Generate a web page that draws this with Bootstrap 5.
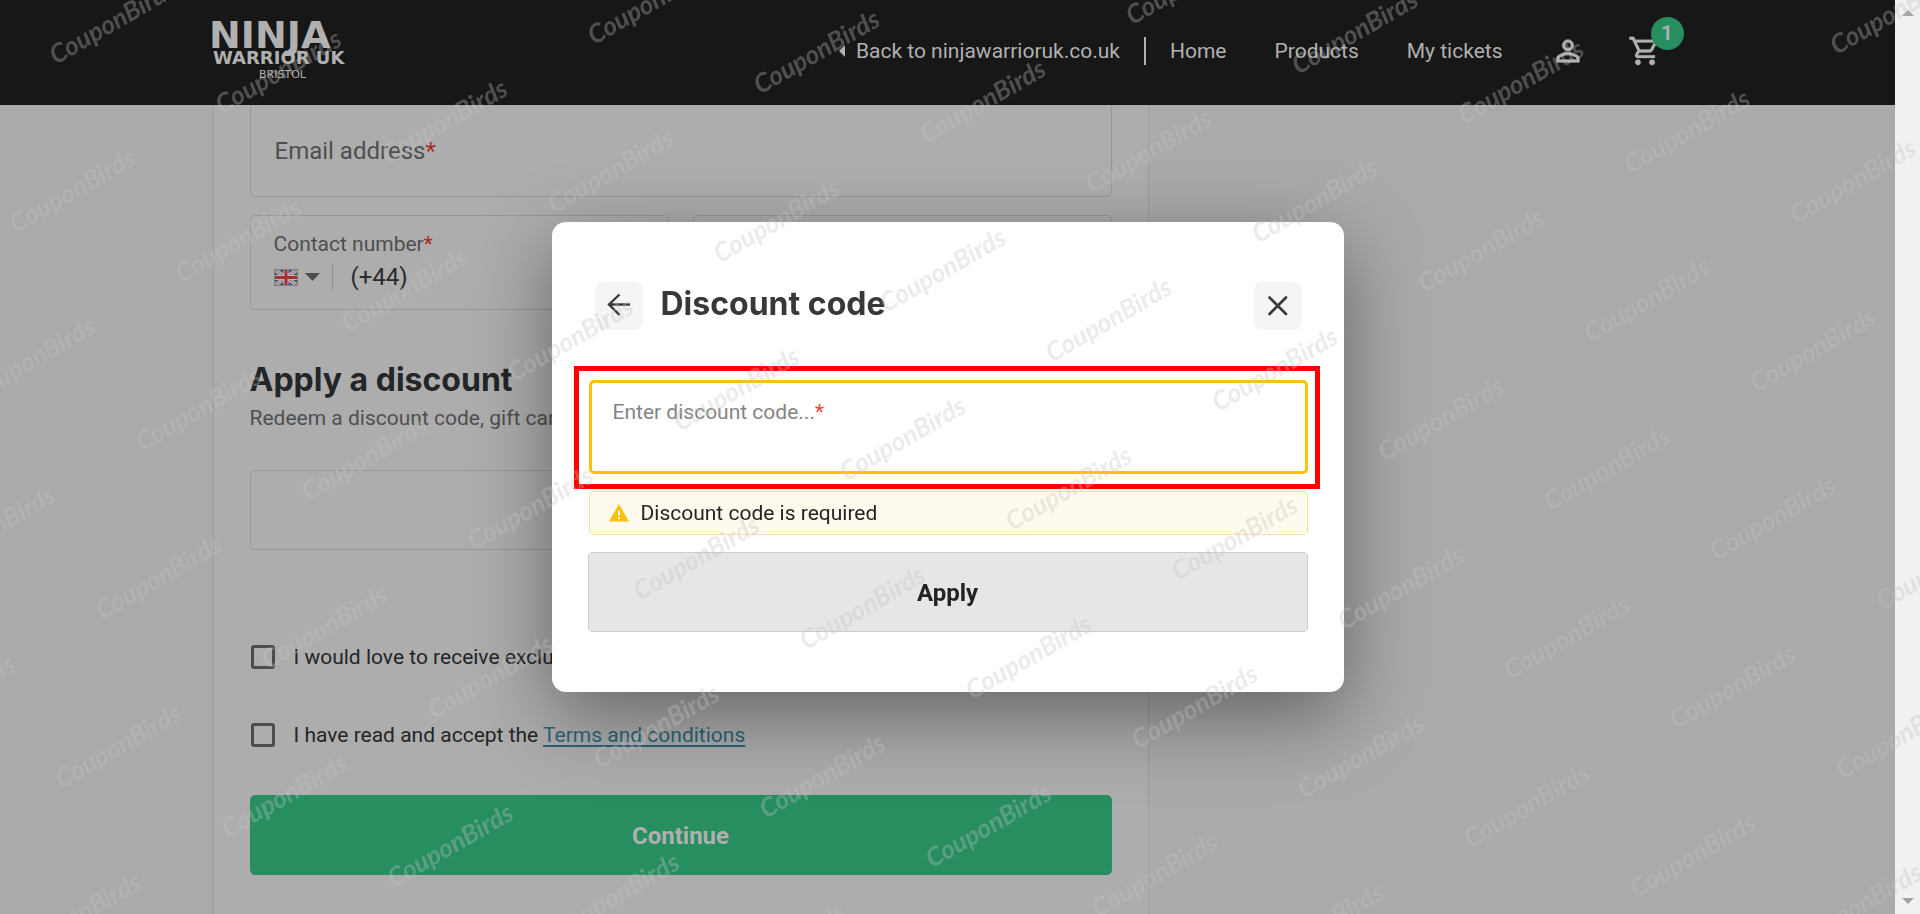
<!DOCTYPE html>
<html lang="en">
<head>
<meta charset="utf-8">
<meta name="viewport" content="width=device-width, initial-scale=1">
<title>Checkout - Ninja Warrior UK Bristol</title>
<link href="https://cdn.jsdelivr.net/npm/bootstrap@5.3.0/dist/css/bootstrap.min.css" rel="stylesheet">
<style>
  body { font-family: Roboto, "Liberation Sans", sans-serif; font-size: 21px; line-height: 32px; color: #232527; background: #aaaaaa; height: 100vh; overflow: hidden; }
  .page-side { padding-right: 25px; }
  .page-wrap { max-width: 1470px; }

  /* header */
  .site-header { background: #171717; height: 105px; }
  .site-header a { color: #b0b0b0; text-decoration: none; }
  .header-row { height: 102px; }
  .main-links { gap: 48px; }
  .back-link { gap: 11px; padding-right: 24px; border-right: 2px solid #b0b0b0; line-height: 28px; margin-right: -24px; }
  .brand-mark text { font-family: "DejaVu Sans", sans-serif; fill: #b0b0b0; }
  .cart-link { margin-right: 21px; margin-left: -5px; }
  .cart-count { top: -17px; left: 23px; width: 33px; height: 33px; line-height: 33px; font-size: 20px; background: #278e5f; }

  /* checkout card */
  .checkout { max-width: 936px; background: #adadad; border: 1px solid #9d9d9d; border-width: 0 1px; padding: 102px 36px 40px; min-height: 100vh; }
  .field-box { position: relative; border: 1px solid #989898; border-radius: 5px; height: 95px; background: none; }
  .field-box label { color: #4f4f4f; }
  .bare-input { border: 0; background: none; outline: 0; padding: 0; min-width: 0; font-size: 24px; line-height: 28px; color: #2b2b2b; }
  .email-box { padding: 2px 24px 0; }
  .fs-field { font-size: 24px; }
  .req { color: #a9281f; }
  .field-pair > div { margin-top: 42px; }
  .phone-box { padding: 12px 23px; }
  .phone-row { gap: 18px; padding-top: 3px; }
  .country { border: 0; border-right: 1px solid #8f8f8f; background: none; height: 27px; padding: 0 12px 0 0; gap: 7px; }
  .section-title { font-family: Inter, "Open Sans", sans-serif; font-weight: 700; font-size: 32px; line-height: 40px; }
  .apply-title { margin: 50px 0 2px; }
  .muted-text { color: #4f5052; }
  .slot-box { height: 80px; margin-top: 36px; }
  .options { display: grid; gap: 54px; margin: 95px 0 48px 1px; }
  .tick { appearance: none; flex: none; width: 24px; height: 24px; margin: 0; border: 3px solid #4d4d4d; border-radius: 3px; background: none; }
  .tick-row { height: 24px; gap: 19px; white-space: nowrap; }
  .tick-row a { color: #2b6577; text-decoration-thickness: 2px; text-underline-offset: 3px; }
  .btn-tall { height: 80px; padding-top: 8px; font-size: 24px; font-weight: 700; border-radius: 5px; }
  .btn-continue, .btn-continue:hover { background: #278e5f; border-color: #278e5f; color: #b0b0b0; }

  /* dialog */
  .dialog-layer { position: fixed; inset: 0; z-index: 1040; }
  .dialog-box { width: 792px; background: #fff; border-radius: 14px; padding: 60px 36px; box-shadow: 0 24px 80px rgba(0,0,0,.42); }
  .dialog-head { padding: 0 6px 0 7px; gap: 18px; margin-bottom: 50px; color: #383838; }
  .dialog-head .section-title { padding-bottom: 4px; }
  .icon-btn { width: 48px; height: 48px; border-radius: 8px; background: #f5f5f5; padding: 0 0 2px; }
  .code-field { position: relative; height: 94px; border: 3px solid #ffc107; border-radius: 5px; padding: 13px 21px; margin-left: 1px; background: #fff; }
  .code-field label { color: #848484; }
  .code-field .req { color: #f44336; }
  .highlight { position: absolute; inset: -17px -15px -18px -18px; border: 5px solid #f00; pointer-events: none; }
  .notice { height: 44px; margin: 17px 0 17px 1px; padding: 0 18px; gap: 11px; background: #fffaee; border: 1px solid #fddf9c; border-radius: 5px; }
  .btn-apply, .btn-apply:hover { background: #e6e6e6; border-color: #cccccc; color: #232323; }

  /* scroll track and repeated site mark */
  .track { position: fixed; top: 0; right: 0; bottom: 0; width: 25px; background: #f1f1f1; padding: 10px 0; z-index: 1045; }
  .site-marks { position: fixed; inset: 0; width: 100%; height: 100%; z-index: 1050; pointer-events: none; }
  .site-marks text { font-family: Lato, "Open Sans", sans-serif; font-style: italic; font-weight: 700; font-size: 26px; fill: #c3c3c3; fill-opacity: .33; }
</style>
</head>
<body>

<header class="site-header fixed-top page-side">
  <div class="page-wrap mx-auto d-flex align-items-center justify-content-between header-row">
    <a href="#" class="brand-mark" aria-label="Ninja Warrior UK Bristol">
      <svg width="146" height="64" viewBox="0 0 146 64" class="d-block" overflow="visible">
        <text x="-4" y="29" font-size="38" font-weight="700">NINJA</text>
        <text x="0" y="45" font-size="18" font-weight="700">WARRIOR UK</text>
        <text x="46" y="59" font-size="11">BRISTOL</text>
      </svg>
    </a>
    <nav class="d-flex align-items-center main-links">
      <a href="#" class="back-link d-flex align-items-center">
        <svg width="6" height="12" viewBox="0 0 6 12"><path d="M6 0v12L0 6z" fill="#b0b0b0"/></svg>
        <span>Back to ninjawarrioruk.co.uk</span>
      </a>
      <a href="#">Home</a>
      <a href="#">Products</a>
      <a href="#">My tickets</a>
      <a href="#" aria-label="Account">
        <svg class="d-block" width="34" height="34" viewBox="0 0 24 24" fill="#b0b0b0" stroke="#b0b0b0" stroke-width=".4"><path d="M12 5.9a2.1 2.1 0 1 1 0 4.2 2.1 2.1 0 0 1 0-4.2m0 9c2.97 0 6.1 1.46 6.1 2.1v1.1H5.9V17c0-.64 3.13-2.1 6.1-2.1M12 4C9.79 4 8 5.79 8 8s1.790 4 4 4 4-1.790 4-4-1.790-4-4-4zm0 9c-2.670 0-8 1.340-8 4v3h16v-3c0-2.660-5.330-4-8-4z"/></svg>
      </a>
      <a href="#" class="cart-link position-relative" aria-label="Basket">
        <svg class="d-block" width="34" height="34" viewBox="0 0 24 24" fill="#b0b0b0" stroke="#b0b0b0" stroke-width=".2"><path d="M15.550 13c.75 0 1.410-.41 1.750-1.030l3.580-6.490A.996.996 0 0 0 20.010 4H5.210l-.94-2H1v2h2l3.600 7.590-1.350 2.440C4.520 15.370 5.480 17 7 17h12v-2H7l1.100-2h7.450zM6.160 6h12.150l-2.760 5H8.530L6.160 6zM7 18c-1.100 0-1.990.9-1.990 2S5.900 22 7 22s2-.9 2-2-.9-2-2-2zm10 0c-1.100 0-1.990.9-1.990 2s.89 2 1.990 2 2-.9 2-2-.9-2-2-2z"/></svg>
        <span class="cart-count position-absolute rounded-circle text-center fw-bold">1</span>
      </a>
    </nav>
  </div>
</header>

<main class="page-side">
  <div class="page-wrap mx-auto">
    <form class="checkout">
      <div class="field-box email-box d-flex align-items-center">
        <label for="email" class="fs-field text-nowrap">Email address<span class="req">*</span></label>
        <input id="email" type="email" class="bare-input flex-grow-1">
      </div>
      <div class="row g-4 field-pair">
        <div class="col-6">
          <div class="field-box phone-box">
            <label for="phone" class="d-block">Contact number<span class="req">*</span></label>
            <div class="d-flex align-items-center phone-row">
              <button type="button" class="country d-flex align-items-center" aria-label="Country: United Kingdom">
                <svg width="24" height="17" viewBox="0 0 24 17">
                  <rect width="24" height="17" fill="#2f5577"/>
                  <path d="M0 0L24 17M24 0L0 17" stroke="#b0b0b0" stroke-width="4"/>
                  <path d="M0 0L24 17M24 0L0 17" stroke="#a86a68" stroke-width="1"/>
                  <path d="M12 0v17M0 8.500h24" stroke="#b4b4b4" stroke-width="5"/>
                  <path d="M12 0v17M0 8.500h24" stroke="#aa2f30" stroke-width="3"/>
                  <rect x=".5" y=".5" width="23" height="16" fill="none" stroke="#7d7d7d"/>
                </svg>
                <svg width="15" height="8" viewBox="0 0 15 8"><path d="M0 0h15L7.500 8z" fill="#4d4d4d"/></svg>
              </button>
              <input id="phone" type="tel" class="bare-input w-50" value="(+44)">
            </div>
          </div>
        </div>
        <div class="col-6">
          <div class="field-box"><input type="text" class="bare-input w-100 h-100" aria-label="Postcode"></div>
        </div>
      </div>

      <h2 class="section-title apply-title">Apply a discount</h2>
      <p class="muted-text mb-0">Redeem a discount code, gift card</p>
      <button type="button" class="field-box slot-box d-block w-100" aria-label="Add a discount"></button>

      <div class="options">
        <div class="tick-row d-flex align-items-center">
          <input type="checkbox" class="tick" id="news">
          <label for="news">I would love to receive exclusive</label>
        </div>
        <div class="tick-row d-flex align-items-center">
          <input type="checkbox" class="tick" id="terms">
          <label for="terms">I have read and accept the <a href="#">Terms and conditions</a></label>
        </div>
      </div>
      <button type="submit" class="btn btn-tall btn-continue w-100">Continue</button>
    </form>
  </div>
</main>

<div class="dialog-layer page-side d-flex align-items-center justify-content-center">
  <section class="dialog-box" role="dialog" aria-labelledby="dlg-title">
    <div class="dialog-head d-flex align-items-center">
      <button type="button" class="btn icon-btn border-0" aria-label="Back">
        <svg width="24" height="24" viewBox="0 0 24 24" fill="none" stroke="#383838" stroke-width="2.400"><path d="M23 11.500H2M12.500 1.500L2 11.500l10.500 10.500"/></svg>
      </button>
      <h2 class="section-title mb-0 me-auto" id="dlg-title">Discount code</h2>
      <button type="button" class="btn icon-btn border-0" aria-label="Close">
        <svg width="20" height="20" viewBox="0 0 20 20" fill="none" stroke="#383838" stroke-width="2.600" stroke-linecap="round"><path d="M1.500 1.500l16.500 16.500M18 1.500L1.500 18"/></svg>
      </button>
    </div>
    <div class="code-field">
      <label for="code" class="d-block">Enter discount code...<span class="req">*</span></label>
      <input id="code" type="text" class="bare-input w-100">
      <div class="highlight"></div>
    </div>
    <div class="notice d-flex align-items-center" role="alert">
      <svg width="22" height="18" viewBox="0 0 22 18"><path d="M11 0l10 17.500H1z" fill="#ffc107"/><path d="M11 7v4.500M11 13v2.200" stroke="#fff" stroke-width="2"/></svg>
      <span>Discount code is required</span>
    </div>
    <button type="button" class="btn btn-tall btn-apply w-100">Apply</button>
  </section>
</div>

<div class="track d-flex flex-column align-items-center justify-content-between" aria-hidden="true">
  <svg width="12" height="6" viewBox="0 0 12 6"><path d="M0 6h12L6 0z" fill="#a3a3a3"/></svg>
  <svg width="12" height="6" viewBox="0 0 12 6"><path d="M0 0h12L6 6z" fill="#a3a3a3"/></svg>
</div>

<svg class="site-marks" aria-hidden="true"><g id="marks" transform="translate(56 65) rotate(-30)"></g></svg>

<script src="https://cdn.jsdelivr.net/npm/bootstrap@5.3.0/dist/js/bootstrap.bundle.min.js"></script>
<script>
  // Staggered rows of the site mark, laid out on the rotated axes; marks outside the window are skipped.
  const group = document.getElementById('marks');
  const stepX = 238, stepY = 126, c = Math.cos(Math.PI / 6), s = 0.5;
  for (let row = -1; row < 16; row++) {
    for (let col = -6; col < 10; col++) {
      const x = col * stepX + (row % 2 ? stepX / 2 : 0), y = row * stepY;
      const px = 56 + x * c + y * s, py = 65 - x * s + y * c;
      if (px < -120 || px > innerWidth || py < 6 || py > innerHeight + 80) continue;
      const t = document.createElementNS('http://www.w3.org/2000/svg', 'text');
      t.setAttribute('x', x);
      t.setAttribute('y', y);
      t.textContent = 'CouponBirds';
      group.appendChild(t);
    }
  }
</script>
</body>
</html>
